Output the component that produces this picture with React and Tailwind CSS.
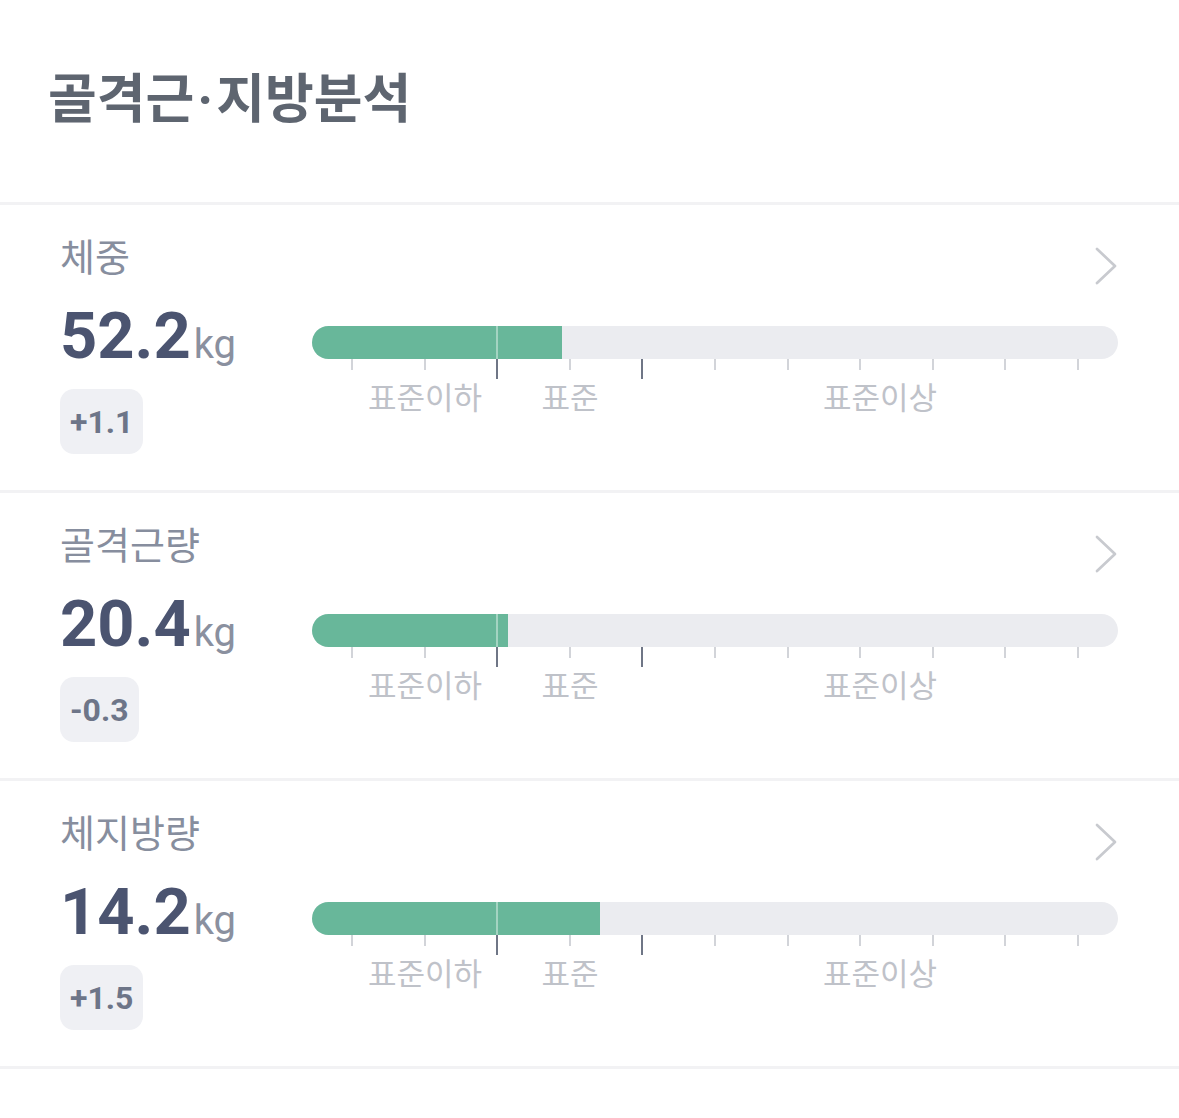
import React from 'react';

const rows = [
  { label: '체중', value: '52.2', diff: '+1.1', fill: 250 },
  { label: '골격근량', value: '20.4', diff: '-0.3', fill: 196 },
  { label: '체지방량', value: '14.2', diff: '+1.5', fill: 288 },
];

const ticks = [0, 1, 2, 3, 4, 5, 6, 7, 8, 9, 10];

const Chevron = () => (
  <svg width="24" height="40" viewBox="0 0 24 40" className="mt-[10px] shrink-0">
    <path d="M3 3 L21 20 L3 37" fill="none" stroke="#c8cacf" strokeWidth="2.7" strokeLinecap="round" strokeLinejoin="round" />
  </svg>
);

const RangeBar = ({ fill }) => (
  <div className="relative w-[806px] mt-[22px]">
    <div className="relative h-[33px] rounded-full bg-[#ebecf0] overflow-hidden">
      <div className="h-full bg-[#68b79a]" style={{ width: fill }} />
      <div className="absolute top-0 left-[184px] w-[2px] h-full bg-white/40" />
    </div>
    <div className="flex justify-between px-[39px]">
      {ticks.map((t) => (
        <div
          key={t}
          className={
            t === 2 || t === 4
              ? 'w-[2px] h-[20px] bg-[#6f7686]'
              : 'w-[2px] h-[11px] bg-[#d2d4d9]'
          }
        />
      ))}
    </div>
    <span className="absolute top-[54px] left-[113px] -translate-x-1/2 text-[31px] leading-none text-[#bfc2c9] whitespace-nowrap">표준이하</span>
    <span className="absolute top-[54px] left-[258px] -translate-x-1/2 text-[31px] leading-none text-[#bfc2c9] whitespace-nowrap">표준</span>
    <span className="absolute top-[54px] left-[568px] -translate-x-1/2 text-[31px] leading-none text-[#bfc2c9] whitespace-nowrap">표준이상</span>
  </div>
);

const Row = ({ label, value, diff, fill }) => (
  <div className="h-[288px] border-t-[3px] border-[#f2f2f4] pl-[60px] pr-[61px] pt-[31px]">
    <div className="flex justify-between items-start h-9">
      <span className="text-[38px] leading-none text-[#878e9e]">{label}</span>
      <Chevron />
    </div>
    <div className="flex mt-[32px]">
      <div className="w-[252px] shrink-0">
        <div className="flex items-baseline gap-[3px] font-['Roboto','Noto_Sans_CJK_KR',sans-serif]">
          <span className="text-[65px] leading-none font-bold text-[#4b5470]">{value}</span>
          <span className="text-[40px] leading-none text-[#8a909f]">kg</span>
        </div>
        <div className="inline-flex items-center h-[65px] px-[10px] mt-[20px] rounded-[14px] bg-[#eff0f4] font-['Roboto',sans-serif] text-[32px] font-bold text-[#6d7588]">
          {diff}
        </div>
      </div>
      <RangeBar fill={fill} />
    </div>
  </div>
);

export default function App() {
  return (
    <div className="w-[1179px] h-[1118px] bg-white font-['Noto_Sans_CJK_KR',sans-serif]">
      <div className="h-[202px] pl-[48px] pt-[69px]">
        <h1 className="text-[53px] leading-none font-bold text-[#5e6570]">
          골격근<span className="font-['Roboto',sans-serif] mx-[3px]">·</span>지방분석
        </h1>
      </div>
      {rows.map((r) => (
        <Row key={r.label} {...r} />
      ))}
      <div className="border-t-[3px] border-[#f2f2f4]" />
    </div>
  );
}
